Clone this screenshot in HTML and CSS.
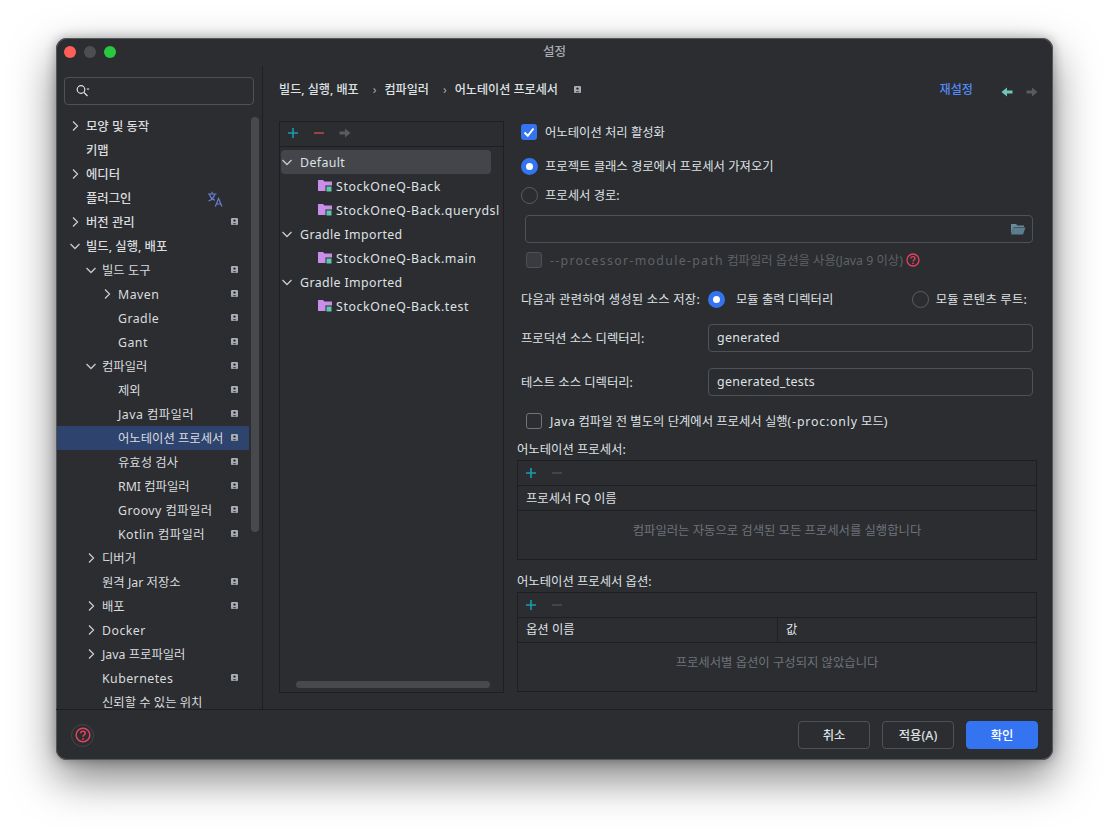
FILE: index.html

```html
<!DOCTYPE html>
<html lang="ko">
<head>
  <meta charset="UTF-8">
  <title>설정</title>
  <link rel="stylesheet" href="styles.css">
</head>
<body>

  <svg class="defs" width="0" height="0">
    <symbol id="chev-r" viewBox="0 0 16 16"><path d="M6 3.500 10.500 8 6 12.500" fill="none" stroke="currentColor" stroke-width="1.300"/></symbol>
    <symbol id="chev-d" viewBox="0 0 16 16"><path d="M3.500 6 8 10.500 12.500 6" fill="none" stroke="currentColor" stroke-width="1.300"/></symbol>
    <symbol id="badge" viewBox="0 0 9 9"><rect width="7" height="7" x="1" y="1" rx="1" fill="#a8adb5"/><circle cx="4.500" cy="3.600" r="1.200" fill="#2b2d30"/><path d="M2.600 7.200c.3-1.200 3.500-1.200 3.800 0z" fill="#2b2d30"/></symbol>
    <symbol id="module" viewBox="0 0 14 14"><path d="M0 1h5l1.500 1.500H14V12H0z" fill="#c98eea"/><rect x="7.500" y="6.500" width="6.500" height="6.500" fill="#2b2d30"/><rect x="8.500" y="7.500" width="5" height="5" fill="#5fc8a8"/></symbol>
    <symbol id="plus" viewBox="0 0 12 12"><path d="M6 1v10M1 6h10" stroke="currentColor" stroke-width="1.600"/></symbol>
    <symbol id="minus" viewBox="0 0 12 12"><path d="M1 6h10" stroke="currentColor" stroke-width="1.600"/></symbol>
    <symbol id="arrow" viewBox="0 0 12 12"><path d="M0.500 4.500h5.500V1.500L11.500 6 6 10.500V7.500H.5z" fill="currentColor"/></symbol>
    <symbol id="help" viewBox="0 0 14 14"><circle cx="7" cy="7" r="6" fill="none" stroke="currentColor" stroke-width="1.300"/><path d="M5 5.500c0-2.500 4-2.500 4 0 0 1.500-2 1.500-2 3" fill="none" stroke="currentColor" stroke-width="1.300"/><circle cx="7" cy="10.400" r=".8" fill="currentColor"/></symbol>
  </svg>

  <div class="window">
    <div class="titlebar">
      <span class="light red"></span>
      <span class="light grey"></span>
      <span class="light green"></span>
      <span class="title">설정</span>
    </div>

    <div class="content">
      <div class="sidebar">
        <div class="search">
          <svg width="16" height="16" viewBox="0 0 16 16"><circle cx="6" cy="6.500" r="3.800" fill="none" stroke="#dfe1e5" stroke-width="1.200"/><path d="M9 9.500 12.500 13" stroke="#dfe1e5" stroke-width="1.300"/><path d="M11.500 5.500h3l-1.500 1.800z" fill="#dfe1e5"/></svg>
        </div>
        <div class="tree">
          <div class="row lv0 strong"><svg class="arr"><use href="#chev-r"/></svg>모양 및 동작</div>
          <div class="row lv0 strong"><span class="arr"></span>키맵</div>
          <div class="row lv0 strong"><svg class="arr"><use href="#chev-r"/></svg>에디터</div>
          <div class="row lv0 strong"><span class="arr"></span>플러그인
            <svg class="translate" width="16" height="16" viewBox="0 0 16 16" fill="none" stroke="#6b7fd0" stroke-width="1.200"><path d="M1 3h8.500M5 .8V3M2.500 3c.8 3.300 3 5.500 5.500 6.300M7.800 3c-.8 3.300-3 6-6.300 7M8.300 15.500l3.300-8 3.300 8M9.300 13h4.600"/></svg>
          </div>
          <div class="row lv0 strong"><svg class="arr"><use href="#chev-r"/></svg>버전 관리<svg class="badge"><use href="#badge"/></svg></div>
          <div class="row lv0 strong"><svg class="arr"><use href="#chev-d"/></svg>빌드, 실행, 배포</div>
          <div class="row lv1"><svg class="arr"><use href="#chev-d"/></svg>빌드 도구<svg class="badge"><use href="#badge"/></svg></div>
          <div class="row lv2"><svg class="arr"><use href="#chev-r"/></svg><span class="lat">Maven</span><svg class="badge"><use href="#badge"/></svg></div>
          <div class="row lv2"><span class="arr"></span><span class="lat">Gradle</span><svg class="badge"><use href="#badge"/></svg></div>
          <div class="row lv2"><span class="arr"></span><span class="lat">Gant</span><svg class="badge"><use href="#badge"/></svg></div>
          <div class="row lv1"><svg class="arr"><use href="#chev-d"/></svg>컴파일러<svg class="badge"><use href="#badge"/></svg></div>
          <div class="row lv2"><span class="arr"></span>제외<svg class="badge"><use href="#badge"/></svg></div>
          <div class="row lv2"><span class="arr"></span><span class="lat">Java 컴파일러</span><svg class="badge"><use href="#badge"/></svg></div>
          <div class="row lv2 selected"><span class="arr"></span>어노테이션 프로세서<svg class="badge"><use href="#badge"/></svg></div>
          <div class="row lv2"><span class="arr"></span>유효성 검사<svg class="badge"><use href="#badge"/></svg></div>
          <div class="row lv2"><span class="arr"></span>RMI 컴파일러<svg class="badge"><use href="#badge"/></svg></div>
          <div class="row lv2"><span class="arr"></span><span class="lat">Groovy 컴파일러</span><svg class="badge"><use href="#badge"/></svg></div>
          <div class="row lv2"><span class="arr"></span><span class="lat">Kotlin 컴파일러</span><svg class="badge"><use href="#badge"/></svg></div>
          <div class="row lv1"><svg class="arr"><use href="#chev-r"/></svg>디버거</div>
          <div class="row lv1"><span class="arr"></span>원격 Jar 저장소<svg class="badge"><use href="#badge"/></svg></div>
          <div class="row lv1"><svg class="arr"><use href="#chev-r"/></svg>배포<svg class="badge"><use href="#badge"/></svg></div>
          <div class="row lv1"><svg class="arr"><use href="#chev-r"/></svg><span class="lat">Docker</span></div>
          <div class="row lv1"><svg class="arr"><use href="#chev-r"/></svg>Java 프로파일러</div>
          <div class="row lv1"><span class="arr"></span><span class="lat">Kubernetes</span><svg class="badge"><use href="#badge"/></svg></div>
          <div class="row lv1"><span class="arr"></span>신뢰할 수 있는 위치</div>
        </div>
        <div class="vscroll"></div>
      </div>

      <div class="main">
        <div class="crumbs">
          <span class="crumb">빌드, 실행, 배포</span>
          <span class="sep">›</span>
          <span class="crumb">컴파일러</span>
          <span class="sep">›</span>
          <span class="crumb">어노테이션 프로세서</span>
          <svg class="badge crumb-badge"><use href="#badge"/></svg>
          <span class="reset">재설정</span>
          <svg class="nav back"><use href="#arrow"/></svg>
          <svg class="nav forward"><use href="#arrow"/></svg>
        </div>

        <div class="panels">
          <div class="profiles">
            <div class="toolbar">
              <svg class="tool add"><use href="#plus"/></svg>
              <svg class="tool remove"><use href="#minus"/></svg>
              <svg class="tool move"><use href="#arrow"/></svg>
            </div>
            <div class="profile-tree">
              <div class="p-group active"><svg class="p-arr"><use href="#chev-d"/></svg>Default</div>
              <div class="p-item"><svg class="p-icon"><use href="#module"/></svg>StockOneQ-Back</div>
              <div class="p-item"><svg class="p-icon"><use href="#module"/></svg>StockOneQ-Back.querydsl</div>
              <div class="p-group"><svg class="p-arr"><use href="#chev-d"/></svg>Gradle Imported</div>
              <div class="p-item"><svg class="p-icon"><use href="#module"/></svg>StockOneQ-Back.main</div>
              <div class="p-group"><svg class="p-arr"><use href="#chev-d"/></svg>Gradle Imported</div>
              <div class="p-item"><svg class="p-icon"><use href="#module"/></svg>StockOneQ-Back.test</div>
            </div>
            <div class="hscroll"></div>
          </div>

          <div class="form">
            <div class="line enable">
              <span class="check on"><svg width="16" height="16" viewBox="0 0 16 16"><path d="M3.500 8.500 6.800 11.800 12.500 4.500" fill="none" stroke="#fff" stroke-width="2"/></svg></span>
              <span>어노테이션 처리 활성화</span>
            </div>
            <div class="line radio-a"><span class="radio on"></span><span>프로젝트 클래스 경로에서 프로세서 가져오기</span></div>
            <div class="line radio-b"><span class="radio"></span><span>프로세서 경로:</span></div>
            <div class="path-field">
              <svg width="16" height="14" viewBox="0 0 16 14"><path d="M1 2h5l1.500 1.500H14V5H4L1 12z" fill="#6a8a9c"/><path d="M1 12.500 3.800 5.500H15.500L13 12.500z" fill="#5b7d90"/></svg>
            </div>
            <div class="line module-path dim">
              <span class="check off"></span>
              <span><span class="flag">--processor-module-path</span> 컴파일러 옵션을 사용(Java 9 이상)</span>
              <svg class="help-small"><use href="#help"/></svg>
            </div>

            <div class="store">
              <span class="store-label">다음과 관련하여 생성된 소스 저장:</span>
              <span class="opt"><span class="radio on"></span><span>모듈 출력 디렉터리</span></span>
              <span class="opt second"><span class="radio"></span><span>모듈 콘텐츠 루트:</span></span>
            </div>
            <div class="field first"><span>프로덕션 소스 디렉터리:</span><div class="text-input">generated</div></div>
            <div class="field"><span>테스트 소스 디렉터리:</span><div class="text-input">generated_tests</div></div>
            <div class="line proc-only"><span class="check off light-border"></span><span><span class="lat">Java</span> 컴파일 전 별도의 단계에서 프로세서 실행<span class="proc">(-proc:only</span> 모드)</span></div>

            <div class="table-label"><span>어노테이션 프로세서:</span></div>
            <div class="table">
              <div class="t-tools">
                <svg class="tool add"><use href="#plus"/></svg>
                <svg class="tool off-tool"><use href="#minus"/></svg>
              </div>
              <div class="t-head"><span>프로세서 FQ 이름</span></div>
              <div class="t-empty">컴파일러는 자동으로 검색된 모든 프로세서를 실행합니다</div>
            </div>

            <div class="table-label second-label"><span>어노테이션 프로세서 옵션:</span></div>
            <div class="table">
              <div class="t-tools">
                <svg class="tool add"><use href="#plus"/></svg>
                <svg class="tool off-tool"><use href="#minus"/></svg>
              </div>
              <div class="t-head"><span class="col1">옵션 이름</span><span class="col2">값</span></div>
              <div class="t-empty">프로세서별 옵션이 구성되지 않았습니다</div>
            </div>
          </div>
        </div>
      </div>
    </div>

    <div class="footer">
      <div class="help-btn"><svg width="16" height="16"><use href="#help"/></svg></div>
      <button class="btn">취소</button>
      <button class="btn">적용(A)</button>
      <button class="btn primary">확인</button>
    </div>
  </div>

</body>
</html>
```

FILE: styles.css

```css
* {
  box-sizing: border-box;
}
body {
  margin: 0;
  height: 834px;
  overflow: hidden;
  background-color: #fff;
  font-family: "Noto Sans", "Noto Sans CJK KR", sans-serif;
  font-size: 12.35px;
  color: #dfe1e5;
}
.defs {
  position: absolute;
}
.window {
  width: 997px;
  height: 722px;
  margin: 38px 0 0 56px;
  display: flex;
  flex-direction: column;
  background-color: #2b2d30;
  border-radius: 11px;
  box-shadow: 0 0 0 1px #55575b inset, 0 18px 44px rgba(0, 0, 0, 0.5), 0 0 12px rgba(0, 0, 0, 0.3);
}
.lat {
  letter-spacing: 0.45px;
}

/* title bar */
.titlebar {
  height: 28px;
  flex: none;
  display: flex;
  align-items: center;
  padding-left: 8px;
  position: relative;
}
.light {
  width: 12px;
  height: 12px;
  border-radius: 50%;
  margin-right: 8px;
}
.red { background-color: #fe5f57; }
.grey { background-color: #4d4e51; }
.green { background-color: #28c83f; }
.title {
  position: absolute;
  left: 0;
  right: 0;
  top: 3px;
  text-align: center;
  font-size: 12.5px;
  font-weight: 500;
  color: #a9abb0;
}

.content {
  flex: 1;
  display: flex;
  min-height: 0;
}

/* left settings tree */
.sidebar {
  width: 207px;
  flex: none;
  position: relative;
  border-right: 1px solid #1e1f22;
  padding-top: 11px;
  overflow: hidden;
}
.search {
  width: 190px;
  height: 28px;
  margin-left: 8px;
  border: 1px solid #4e5157;
  border-radius: 4px;
  display: flex;
  align-items: center;
  padding-left: 10px;
}
.tree {
  width: 192px;
  margin: 9px 0 0 1px;
}
.row {
  height: 24px;
  display: flex;
  align-items: center;
  padding: 0 10px;
  white-space: nowrap;
  position: relative;
  color: #d9dbdf;
}
.row.strong {
  font-weight: 500;
}
.lv0 { padding-left: 10px; }
.lv1 { padding-left: 26px; }
.lv2 { padding-left: 42px; }
.arr {
  width: 16px;
  height: 16px;
  flex: none;
  margin-right: 3px;
  color: #c8cacf;
}
.badge {
  width: 9px;
  height: 9px;
  position: absolute;
  right: 10px;
  top: 7px;
}
.translate {
  position: absolute;
  right: 26px;
  top: 5px;
}
.selected {
  background-color: #2e436e;
}
.vscroll {
  position: absolute;
  right: 3px;
  top: 51px;
  width: 8px;
  height: 415px;
  border-radius: 4px;
  background-color: #48494d;
}

/* right side */
.main {
  flex: 1;
  min-width: 0;
  padding-left: 16px;
}
.crumbs {
  height: 55px;
  display: flex;
  align-items: center;
  padding: 0 15px 9px 0;
  font-weight: 500;
  font-size: 12.1px;
  position: relative;
}
.sep {
  margin: 0 8px 0 14px;
  font-weight: 400;
  color: #a9abb0;
}
.crumb-badge {
  position: static;
  margin: 1px 0 0 15px;
}
.reset {
  margin-left: auto;
  color: #548af7;
}
.nav {
  width: 12px;
  height: 12px;
  margin: 6px 0 0 13px;
}
.back {
  margin-left: 28px;
  color: #6fc7b6;
  transform: scaleX(-1);
}
.forward {
  color: #5a5b5f;
}
.panels {
  display: flex;
  align-items: flex-start;
}

/* profiles list */
.profiles {
  width: 225px;
  height: 572px;
  flex: none;
  border: 1px solid #1e1f22;
  position: relative;
}
.toolbar {
  height: 25px;
  border-bottom: 1px solid #1e1f22;
  display: flex;
  align-items: center;
  padding: 0 0 2px 7px;
  gap: 14px;
}
.tool {
  width: 12px;
  height: 12px;
}
.add { color: #1a9bb0; }
.remove { color: #b34a4a; }
.move { color: #5a5b5f; }
.off-tool { color: #4b4c50; }
.profile-tree {
  padding-top: 3px;
  overflow: hidden;
}
.p-group {
  height: 24px;
  display: flex;
  align-items: center;
  margin: 0 12px 0 1px;
  border-radius: 4px;
  white-space: nowrap;
  letter-spacing: 0.4px;
}
.p-group.active {
  background-color: #43454a;
}
.p-arr {
  width: 16px;
  height: 16px;
  margin: 0 5px 0 -2px;
  color: #c8cacf;
}
.p-item {
  height: 24px;
  display: flex;
  align-items: center;
  padding-left: 38px;
  white-space: nowrap;
  overflow: hidden;
  letter-spacing: 0.6px;
}
.p-icon {
  width: 14px;
  height: 14px;
  flex: none;
  margin-right: 4px;
}
.hscroll {
  position: absolute;
  left: 16px;
  bottom: 4px;
  width: 194px;
  height: 7px;
  border-radius: 4px;
  background-color: #48494d;
}

/* form */
.form {
  width: 520px;
  margin-left: 13px;
}
.line {
  height: 22px;
  display: flex;
  align-items: center;
  margin-left: 4px;
  white-space: nowrap;
}
.check {
  width: 16px;
  height: 16px;
  flex: none;
  border-radius: 3px;
  margin-right: 8px;
}
.check.on {
  background-color: #3574f0;
}
.check.off {
  background-color: #393b40;
  border: 1px solid #4e5157;
}
.check.light-border {
  background-color: transparent;
  border-color: #6f737a;
}
.radio {
  width: 17px;
  height: 17px;
  flex: none;
  border-radius: 50%;
  border: 1px solid #5a5d63;
  margin-right: 7px;
}
.radio.on {
  border: 5.500px solid #3574f0;
  background-color: #fff;
}
.radio-a { margin-top: 12px; }
.radio-b { margin-top: 7px; }
.path-field {
  height: 28px;
  margin: 9px 4px 0 8px;
  border: 1px solid #4e5157;
  border-radius: 4px;
  display: flex;
  align-items: center;
  justify-content: flex-end;
  padding-right: 6px;
}
.module-path {
  margin: 6px 0 0 9px;
}
.dim {
  color: #5f6266;
}
.flag {
  letter-spacing: 1.3px;
}
.proc {
  letter-spacing: 0.8px;
}
.help-small {
  width: 14px;
  height: 14px;
  margin-left: 3px;
  color: #e8415f;
}
.store {
  height: 22px;
  margin: 17px 4px 0;
  display: grid;
  grid-template-columns: 187px 1fr auto;
  align-items: center;
  white-space: nowrap;
}
.store-label {
  letter-spacing: 0.2px;
}
.opt {
  display: flex;
  align-items: center;
}
.opt .radio {
  margin-right: 11px;
}
.opt.second {
  margin-right: 6px;
  letter-spacing: 0.2px;
}
.opt.second .radio {
  margin-right: 7px;
}
.field {
  height: 28px;
  margin: 16px 4px 0;
  display: grid;
  grid-template-columns: 187px 1fr;
  align-items: center;
}
.field.first {
  margin-top: 14px;
}
.text-input {
  height: 28px;
  border: 1px solid #4e5157;
  border-radius: 4px;
  background-color: #2b2d30;
  padding: 0 8px;
  line-height: 25px;
  letter-spacing: 0.33px;
}
.proc-only {
  margin: 14px 0 0 9px;
}
.table-label {
  height: 22px;
  margin-top: 6px;
  display: flex;
  align-items: center;
}
.second-label {
  margin-top: 10px;
}
.table {
  height: 100px;
  border: 1px solid #1e1f22;
}
.t-tools {
  height: 25px;
  border-bottom: 1px solid #1e1f22;
  display: flex;
  align-items: center;
  padding-left: 7px;
  gap: 14px;
}
.t-head {
  height: 25px;
  border-bottom: 1px solid #1e1f22;
  display: flex;
  align-items: center;
  padding-left: 8px;
}
.t-head .col1 {
  width: 251px;
  line-height: 24px;
}
.t-head .col2 {
  flex: 1;
  line-height: 24px;
  border-left: 1px solid #1e1f22;
  padding-left: 8px;
}
.t-empty {
  height: 48px;
  padding-bottom: 10px;
  display: flex;
  align-items: center;
  justify-content: center;
  color: #6f737a;
}

/* footer */
.footer {
  height: 51px;
  flex: none;
  border-top: 1px solid #1e1f22;
  display: flex;
  align-items: center;
  gap: 12px;
  padding: 0 15px;
}
.help-btn {
  width: 23px;
  height: 23px;
  border: 1px solid #43454a;
  border-radius: 50%;
  display: flex;
  align-items: center;
  justify-content: center;
  color: #e8415f;
  margin-right: auto;
}
.btn {
  width: 72px;
  height: 28px;
  border: 1px solid #4e5157;
  border-radius: 4px;
  background-color: transparent;
  color: #dfe1e5;
  font-family: inherit;
  font-size: 12.35px;
  font-weight: 500;
  padding: 0;
}
.btn.primary {
  background-color: #3574f0;
  border-color: #3574f0;
  color: #fff;
}
```
